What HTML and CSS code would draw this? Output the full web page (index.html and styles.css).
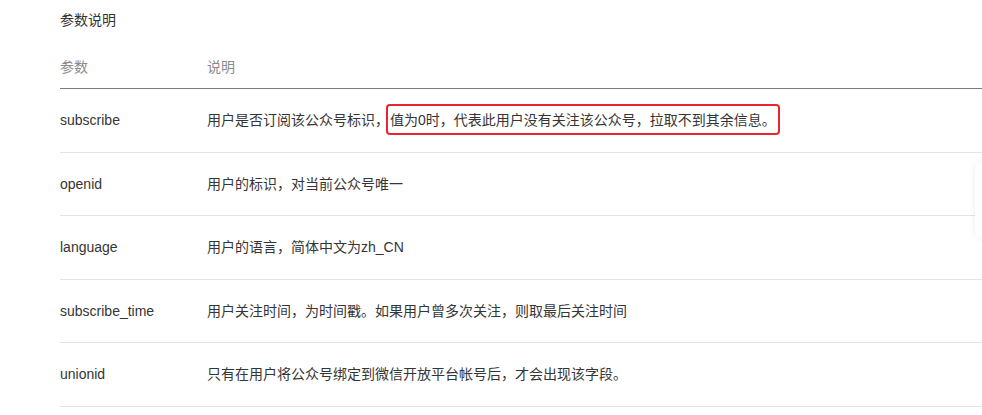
FILE: index.html
```html
<!DOCTYPE html>
<html lang="zh-CN">
<head>
    <meta charset="UTF-8">
    <meta name="viewport" content="width=device-width, initial-scale=1.0">
    <title>参数说明</title>
    <link rel="stylesheet" href="styles.css">
</head>
<body>
    <div class="content">
        <p class="section-title">参数说明</p>
        <table class="param-table">
            <thead>
                <tr>
                    <th class="col-name">参数</th>
                    <th>说明</th>
                </tr>
            </thead>
            <tbody>
                <tr>
                    <td>subscribe</td>
                    <td>用户是否订阅该公众号标识，<span class="mark">值为0时，代表此用户没有关注该公众号，拉取不到其余信息。</span></td>
                </tr>
                <tr>
                    <td>openid</td>
                    <td>用户的标识，对当前公众号唯一</td>
                </tr>
                <tr>
                    <td>language</td>
                    <td>用户的语言，简体中文为zh_CN</td>
                </tr>
                <tr>
                    <td>subscribe_time</td>
                    <td>用户关注时间，为时间戳。如果用户曾多次关注，则取最后关注时间</td>
                </tr>
                <tr>
                    <td>unionid</td>
                    <td>只有在用户将公众号绑定到微信开放平台帐号后，才会出现该字段。</td>
                </tr>
            </tbody>
        </table>
    </div>
    <div class="side-card"></div>
</body>
</html>
```

FILE: styles.css
```css
body {
    margin: 0;
    padding: 0;
    background-color: #fff;
    font-family: "Liberation Sans", "Noto Sans CJK SC", sans-serif;
    font-size: 14px;
    color: #353535;
}
.content {
    padding-left: 60px;
}
.section-title {
    margin: 9px 0 0;
    line-height: 22px;
    color: #333;
}
.param-table {
    width: 100%;
    margin-top: 25px;
    border-collapse: collapse;
}
.param-table th {
    padding: 0 0 10px;
    line-height: 22px;
    font-weight: normal;
    text-align: left;
    color: #8a8a8a;
    border-bottom: 1px solid #7c7c7c;
}
.param-table .col-name {
    width: 147px;
}
.param-table td {
    padding: 20px 0 20.5px;
    line-height: 22px;
    border-bottom: 1px solid #e4e4e4;
}
.mark {
    margin-left: -3px;
    padding: 6px 2px 5px;
    border: 2px solid #e8262c;
    border-radius: 4px;
}
.side-card {
    position: absolute;
    left: 975px;
    top: 162px;
    width: 40px;
    height: 76px;
    background-color: #fff;
    border-radius: 6px;
    box-shadow: 0 0 6px rgba(0, 0, 0, 0.08);
}
```
